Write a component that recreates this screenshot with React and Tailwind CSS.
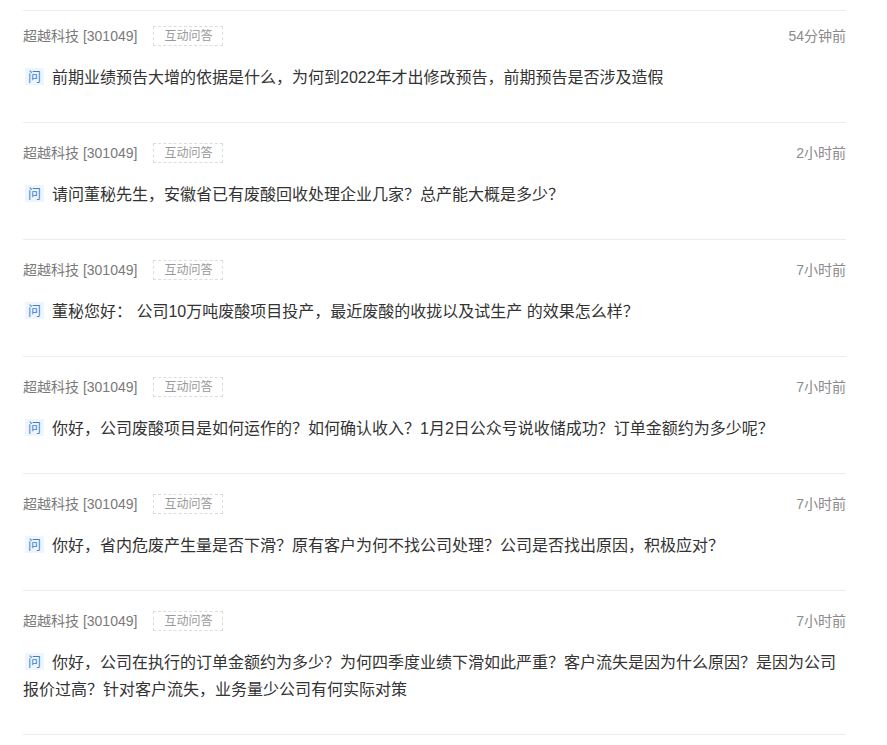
import React from "react";

const items = [
  { time: "54分钟前", q: "前期业绩预告大增的依据是什么，为何到2022年才出修改预告，前期预告是否涉及造假" },
  { time: "2小时前", q: "请问董秘先生，安徽省已有废酸回收处理企业几家？总产能大概是多少？" },
  { time: "7小时前", q: "董秘您好： 公司10万吨废酸项目投产，最近废酸的收拢以及试生产 的效果怎么样？" },
  { time: "7小时前", q: "你好，公司废酸项目是如何运作的？如何确认收入？1月2日公众号说收储成功？订单金额约为多少呢？" },
  { time: "7小时前", q: "你好，省内危废产生量是否下滑？原有客户为何不找公司处理？公司是否找出原因，积极应对？" },
  { time: "7小时前", q: "你好，公司在执行的订单金额约为多少？为何四季度业绩下滑如此严重？客户流失是因为什么原因？是因为公司报价过高？针对客户流失，业务量少公司有何实际对策" },
];

export default function App() {
  return (
    <div
      className="bg-white min-h-[745px] pt-[10px] pl-[23px]"
      style={{ fontFamily: '"Liberation Sans", "Noto Sans CJK SC", sans-serif' }}
    >
      <div className="w-[823px] border-b border-[#ededed]">
        {items.map((it, i) => (
          <div
            key={i}
            className={`border-t border-[#ededed] pb-[31px] ${i === 0 ? "pt-[15px]" : "pt-[20px]"}`}
          >
            <div className="flex items-center h-[20px]">
              <span className="text-[14px] text-[#7a7a7a] leading-[20px]">超越科技 [301049]</span>
              <span className="ml-[16px] h-[20px] w-[70px] border border-dashed border-[#dcdcdc] text-[12px] text-[#999] flex items-center justify-center leading-none">
                互动问答
              </span>
              <span className="ml-auto text-[14px] text-[#8a8a8a] leading-[20px]">{it.time}</span>
            </div>
            <div className="mt-[18px] text-[16px] leading-[27px] text-[#333]">
              <span className="inline-block align-middle relative top-[-2px] w-[19px] h-[17px] bg-[#eef5fc] text-[#3d7fd6] text-[13px] leading-[17px] text-center mr-[8px] ml-[2px]">
                问
              </span>
              {it.q}
            </div>
          </div>
        ))}
      </div>
    </div>
  );
}
